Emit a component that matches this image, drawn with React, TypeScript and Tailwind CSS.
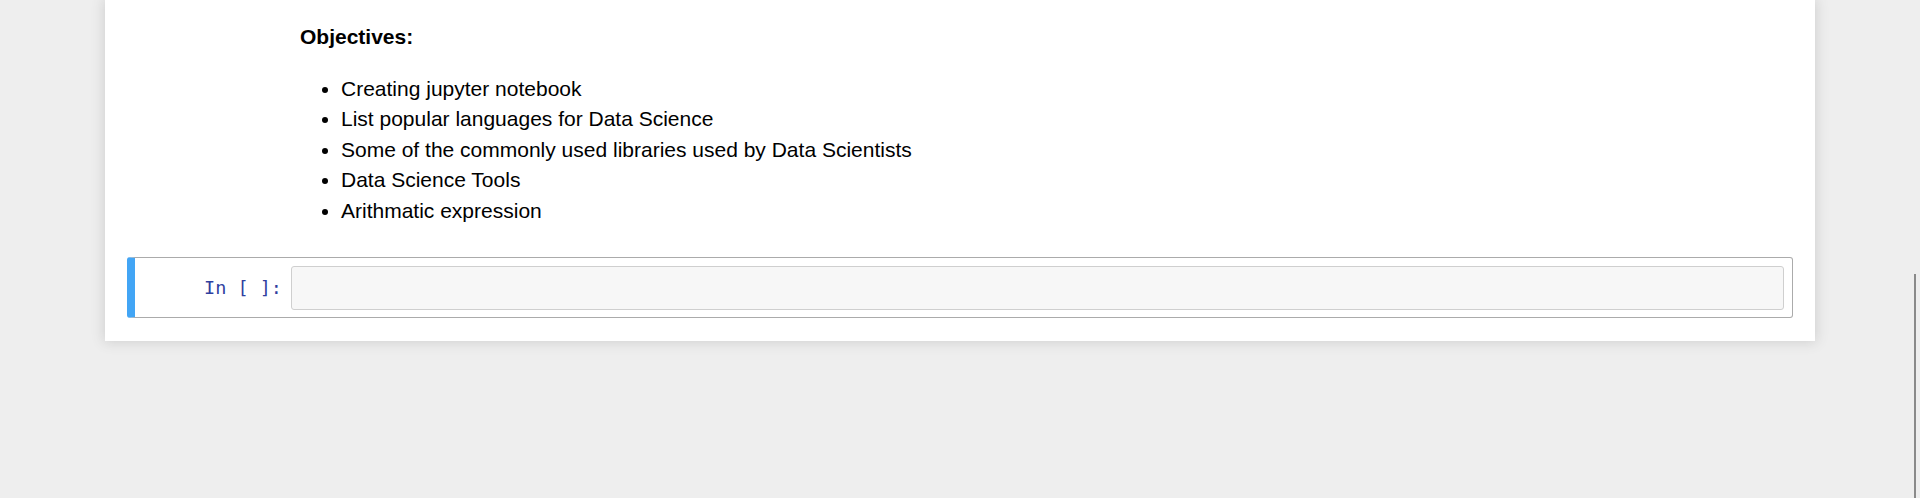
export default function App() {
  const objectives = [
    "Creating jupyter notebook",
    "List popular languages for Data Science",
    "Some of the commonly used libraries used by Data Scientists",
    "Data Science Tools",
    "Arithmatic expression",
  ];

  return (
    <div
      className="relative min-h-screen w-full bg-[#eeeeee] overflow-hidden"
      style={{ fontFamily: "'Liberation Sans', Arial, sans-serif" }}
    >
      {/* notebook panel */}
      <div className="mx-auto w-[1710px] bg-white px-[22px] pt-[13px] pb-[23px] shadow-[0_0_12px_1px_rgba(87,87,87,0.2)]">
        {/* markdown cell */}
        <div className="flex border border-l-[8px] border-transparent pt-[8px] pb-[8px] pr-[8px]">
          <div className="w-[156px] shrink-0" />
          <div className="flex-1 pl-[9px] text-[21px] leading-[30.5px] text-black">
            <p className="font-bold">Objectives:</p>
            <ul className="mt-[21px] list-disc pl-[41px]">
              {objectives.map((o) => (
                <li key={o}>{o}</li>
              ))}
            </ul>
          </div>
        </div>

        {/* code cell (selected) */}
        <div className="mt-[22px] flex items-center rounded-[3px] border border-[#ababab] border-l-[8px] border-l-[#42a5f5] pt-[8px] pb-[7px] pr-[8px]">
          <div
            className="w-[156px] shrink-0 pr-[9px] text-right text-[18.5px] text-[#303f9f]"
            style={{ fontFamily: "'DejaVu Sans Mono', 'Liberation Mono', monospace" }}
          >
            In [ ]:
          </div>
          <div className="h-[44px] flex-1 rounded-[3px] border border-[#cfcfcf] bg-[#f7f7f7]" />
        </div>
      </div>

      {/* overlay scrollbar thumb */}
      <div className="absolute right-[4px] top-[274px] bottom-0 w-[2px] bg-[#8a8a8a]" />
    </div>
  );
}
